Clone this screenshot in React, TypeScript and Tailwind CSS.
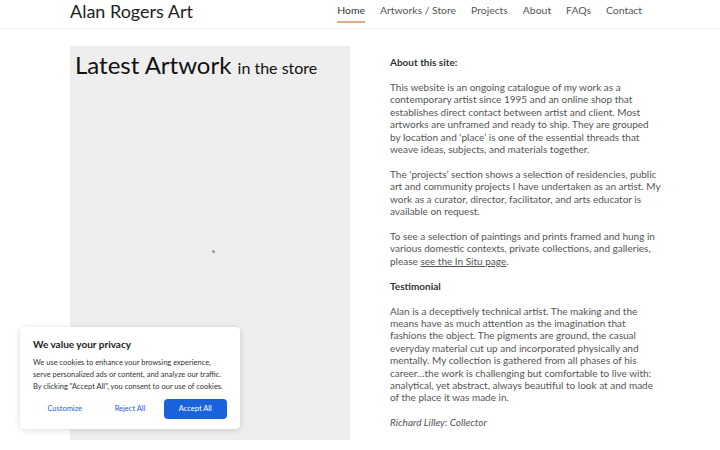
import React from 'react';

const navItems = ['Home', 'Artworks / Store', 'Projects', 'About', 'FAQs', 'Contact'];

const Lines: React.FC<{ lines: React.ReactNode[] }> = ({ lines }) => (
  <>
    {lines.map((l, i) => (
      <span key={i} className="block whitespace-nowrap">{l}</span>
    ))}
  </>
);

const CookieBanner: React.FC = () => (
  <div className="absolute left-[20px] top-[327px] w-[220px] rounded bg-white px-[13px] pt-[10px] pb-[10px] shadow-[0_1px_6px_rgba(0,0,0,0.15)]">
    <p className="text-[10px] font-bold text-[#212121]">We value your privacy</p>
    <p className="mt-[5px] text-[7.5px] leading-[12px] text-[#333]">
      <Lines
        lines={[
          'We use cookies to enhance your browsing experience,',
          'serve personalized ads or content, and analyze our traffic.',
          'By clicking "Accept All", you consent to our use of cookies.',
        ]}
      />
    </p>
    <div className="mt-[6px] flex gap-[2px] text-[7.5px]">
      <button className="h-[20px] flex-1 rounded-sm text-[#1863dc]">Customize</button>
      <button className="h-[20px] flex-1 rounded-sm text-[#1863dc]">Reject All</button>
      <button className="h-[20px] flex-1 rounded-sm bg-[#1863dc] text-white">Accept All</button>
    </div>
  </div>
);

const App: React.FC = () => {
  return (
    <div className="relative h-[450px] w-[720px] overflow-hidden bg-white font-['Lato',sans-serif]">
      <header className="flex h-[29px] items-center border-b border-[#f0f0f0] pb-[6px] pl-[70px] pr-[78px]">
        <span className="text-[18px] leading-none text-[#222]">Alan Rogers Art</span>
        <nav className="ml-auto flex gap-[15px] text-[10.4px] text-[#555]">
          {navItems.map((item, i) => (
            <span key={item} className={`relative ${i === 0 ? 'text-[#333]' : ''}`}>
              {item}
              {i === 0 && <span className="absolute left-0 right-0 top-[18px] h-[2px] bg-[#e0ac82]" />}
            </span>
          ))}
        </nav>
      </header>

      <main className="flex gap-[40px] px-[70px] pt-[17px]">
        <section className="relative h-[394px] w-[280px] shrink-0 bg-[#eeeeee] px-[5px] pt-[4px]">
          <h1 className="text-[24px] leading-[30px] text-[#111]">
            Latest Artwork <span className="text-[16px]">in the store</span>
          </h1>
          <span className="absolute left-[142px] top-[204px] h-[3px] w-[3px] rounded-full bg-[#999]" />
        </section>

        <section className="w-[262px] pt-[10px] text-[10px] leading-[12.4px] text-[#555]">
          <p className="font-bold text-[#333]">About this site:</p>
          <p className="mt-[12.5px]">
            <Lines
              lines={[
                'This website is an ongoing catalogue of my work as a',
                'contemporary artist since 1995 and an online shop that',
                'establishes direct contact between artist and client. Most',
                'artworks are unframed and ready to ship. They are grouped',
                'by location and ‘place’ is one of the essential threads that',
                'weave ideas, subjects, and materials together.',
              ]}
            />
          </p>
          <p className="mt-[12.5px]">
            <Lines
              lines={[
                'The ‘projects’ section shows a selection of residencies, public',
                'art and community projects I have undertaken as an artist. My',
                'work as a curator, director, facilitator, and arts educator is',
                'available on request.',
              ]}
            />
          </p>
          <p className="mt-[12.5px]">
            <Lines
              lines={[
                'To see a selection of paintings and prints framed and hung in',
                'various domestic contexts, private collections, and galleries,',
                <>
                  please <a className="underline">see the In Situ page</a>.
                </>,
              ]}
            />
          </p>
          <p className="mt-[12.5px] font-bold text-[#333]">Testimonial</p>
          <p className="mt-[12.5px]">
            <Lines
              lines={[
                'Alan is a deceptively technical artist. The making and the',
                'means have as much attention as the imagination that',
                'fashions the object. The pigments are ground, the casual',
                'everyday material cut up and incorporated physically and',
                'mentally. My collection is gathered from all phases of his',
                'career…the work is challenging but comfortable to live with:',
                'analytical, yet abstract, always beautiful to look at and made',
                'of the place it was made in.',
              ]}
            />
          </p>
          <p className="mt-[12.5px] italic">Richard Lilley: Collector</p>
        </section>
      </main>

      <CookieBanner />
    </div>
  );
};

export default App;
